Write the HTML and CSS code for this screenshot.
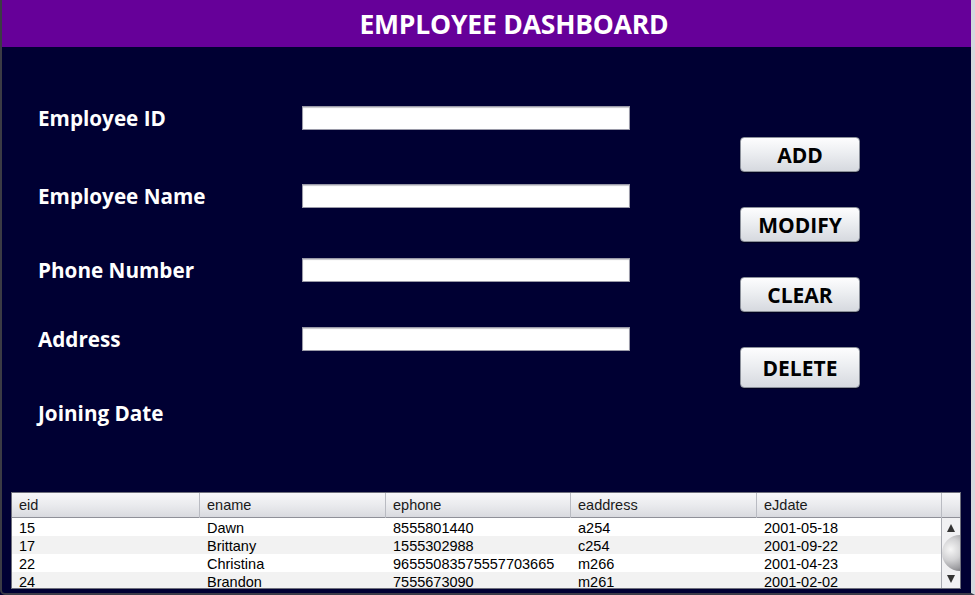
FILE: index.html
```html
<!DOCTYPE html>
<html lang="en">
<head>
<meta charset="utf-8">
<title>Employee Dashboard</title>
<link rel="stylesheet" href="styles.css">
</head>
<body>
<div class="window">
  <header class="titlebar">
    <h1 class="title">EMPLOYEE DASHBOARD</h1>
  </header>
  <main class="main">
    <section class="top">
      <div class="form">
        <div class="row r1"><label class="label">Employee ID</label><input class="field" type="text"></div>
        <div class="row r2"><label class="label">Employee Name</label><input class="field" type="text"></div>
        <div class="row r3"><label class="label">Phone Number</label><input class="field" type="text"></div>
        <div class="row r4"><label class="label">Address</label><input class="field" type="text"></div>
        <div class="row r5"><label class="label">Joining Date</label></div>
      </div>
      <div class="actions">
        <button class="btn">ADD</button>
        <button class="btn">MODIFY</button>
        <button class="btn">CLEAR</button>
        <button class="btn btn-tall">DELETE</button>
      </div>
    </section>
    <section class="table">
      <div class="thead">
        <div class="th">eid</div>
        <div class="th">ename</div>
        <div class="th">ephone</div>
        <div class="th">eaddress</div>
        <div class="th">eJdate</div>
        <div class="th th-corner"></div>
      </div>
      <div class="tbody">
        <div class="rows">
          <div class="tr"><div class="td">15</div><div class="td">Dawn</div><div class="td">8555801440</div><div class="td">a254</div><div class="td">2001-05-18</div></div>
          <div class="tr alt"><div class="td">17</div><div class="td">Brittany</div><div class="td">1555302988</div><div class="td">c254</div><div class="td">2001-09-22</div></div>
          <div class="tr"><div class="td">22</div><div class="td">Christina</div><div class="td">96555083575557703665</div><div class="td">m266</div><div class="td">2001-04-23</div></div>
          <div class="tr alt"><div class="td">24</div><div class="td">Brandon</div><div class="td">7555673090</div><div class="td">m261</div><div class="td">2001-02-02</div></div>
        </div>
        <div class="scrollbar">
          <div class="arrow up"></div>
          <div class="track"><div class="thumb"></div></div>
          <div class="arrow down"></div>
        </div>
      </div>
    </section>
  </main>
</div>
</body>
</html>
```
FILE: styles.css
```css
* { box-sizing: border-box; }
html, body { margin: 0; padding: 0; }
body { width: 975px; height: 595px; overflow: hidden; background: #000033; }

.window {
  width: 975px;
  height: 595px;
  display: flex;
  flex-direction: column;
  border-left: 2px solid #3b3b44;
  border-right: 4px solid #d4d8dd;
  border-bottom: 2px solid #3b3b48;
  border-bottom-left-radius: 5px;
  background: #000033;
}

.titlebar {
  height: 47px;
  background: #660099;
  display: flex;
  align-items: center;
  justify-content: center;
  flex-shrink: 0;
}
.title {
  margin: 0;
  color: #ffffff;
  font-family: "Open Sans", "DejaVu Sans", sans-serif;
  font-weight: 700;
  font-size: 26.5px;
  letter-spacing: -0.2px;
  padding-left: 55px;
}

.main {
  flex: 1;
  display: flex;
  flex-direction: column;
  padding: 59px 0 0 9px;
}

.top { display: flex; height: 386px; flex-shrink: 0; }

.form {
  display: grid;
  grid-template-rows: 78px 74px 69px 74px 24px;
  padding-left: 27px;
}
.row {
  display: grid;
  grid-template-columns: 264px 328px;
  align-items: center;
  height: 24px;
}
.label {
  color: #ffffff;
  font-family: "Open Sans", "DejaVu Sans", sans-serif;
  font-weight: 700;
  font-size: 20.7px;
  line-height: 24px;
  margin-top: -1px;
  white-space: nowrap;
}
.field {
  width: 328px;
  height: 24px;
  margin: 0;
  background: #ffffff;
  border: 1px solid #9a9aa8;
  box-shadow: inset 0 1px 1px #c8c8cc;
  padding: 0 4px;
}

.actions {
  display: flex;
  flex-direction: column;
  gap: 35px;
  margin-left: 110px;
  margin-top: 31px;
}
.btn {
  width: 120px;
  height: 35px;
  margin: 0;
  padding: 0;
  border: 1px solid #8b909a;
  border-radius: 4px;
  background: linear-gradient(#fdfdfe 0%, #eceef1 45%, #d6d9df 100%);
  box-shadow: 0 1px 1px rgba(0,0,0,0.4);
  color: #000000;
  font-family: "Open Sans", "DejaVu Sans", sans-serif;
  font-weight: 700;
  font-size: 21px;
}
.btn-tall { height: 41px; }

.table {
  width: 950px;
  height: 97px;
  border: 1px solid #6e6f7c;
  background: #ffffff;
  display: flex;
  flex-direction: column;
  font-family: "Liberation Sans", Arial, sans-serif;
  font-size: 14.5px;
  color: #000000;
  overflow: hidden;
  flex-shrink: 0;
}
.thead {
  display: grid;
  grid-template-columns: 188px 186px 185px 186px 185px 1fr;
  height: 25px;
  background: linear-gradient(#f7f7f9 0%, #eaebee 50%, #d9dadf 100%);
  border-bottom: 1px solid #8f9098;
  flex-shrink: 0;
}
.th {
  padding-left: 7px;
  line-height: 25px;
  color: #1a1a1a;
  border-right: 1px solid #b9bbc2;
}
.th-corner { border-right: none; }

.tbody { flex: 1; display: flex; overflow: hidden; }
.rows { width: 929px; }
.tr {
  display: grid;
  grid-template-columns: 188px 186px 185px 186px 185px;
  height: 18px;
  background: #ffffff;
}
.tr.alt { background: #f2f2f2; }
.td {
  padding: 1px 0 0 7px;
  line-height: 18px;
  white-space: nowrap;
}

.scrollbar {
  width: 20px;
  display: flex;
  flex-direction: column;
  border-left: 1px solid #a9abb2;
  background: #f1f1f3;
}
.arrow { height: 17px; position: relative; flex-shrink: 0; }
.arrow::after {
  content: "";
  position: absolute;
  left: 5px;
  border-left: 4px solid transparent;
  border-right: 4px solid transparent;
}
.arrow.up::after { top: 6px; border-bottom: 8px solid #333333; }
.arrow.down::after { top: 4px; border-top: 8px solid #333333; }
.track { flex: 1; display: flex; }
.thumb {
  width: 19px;
  height: 36px;
  border-radius: 18px 0 0 18px;
  background: radial-gradient(circle at 45% 40%, #f6f6f6 0%, #d2d2d4 45%, #9a9a9e 85%, #7a7a7e 100%);
}
```
